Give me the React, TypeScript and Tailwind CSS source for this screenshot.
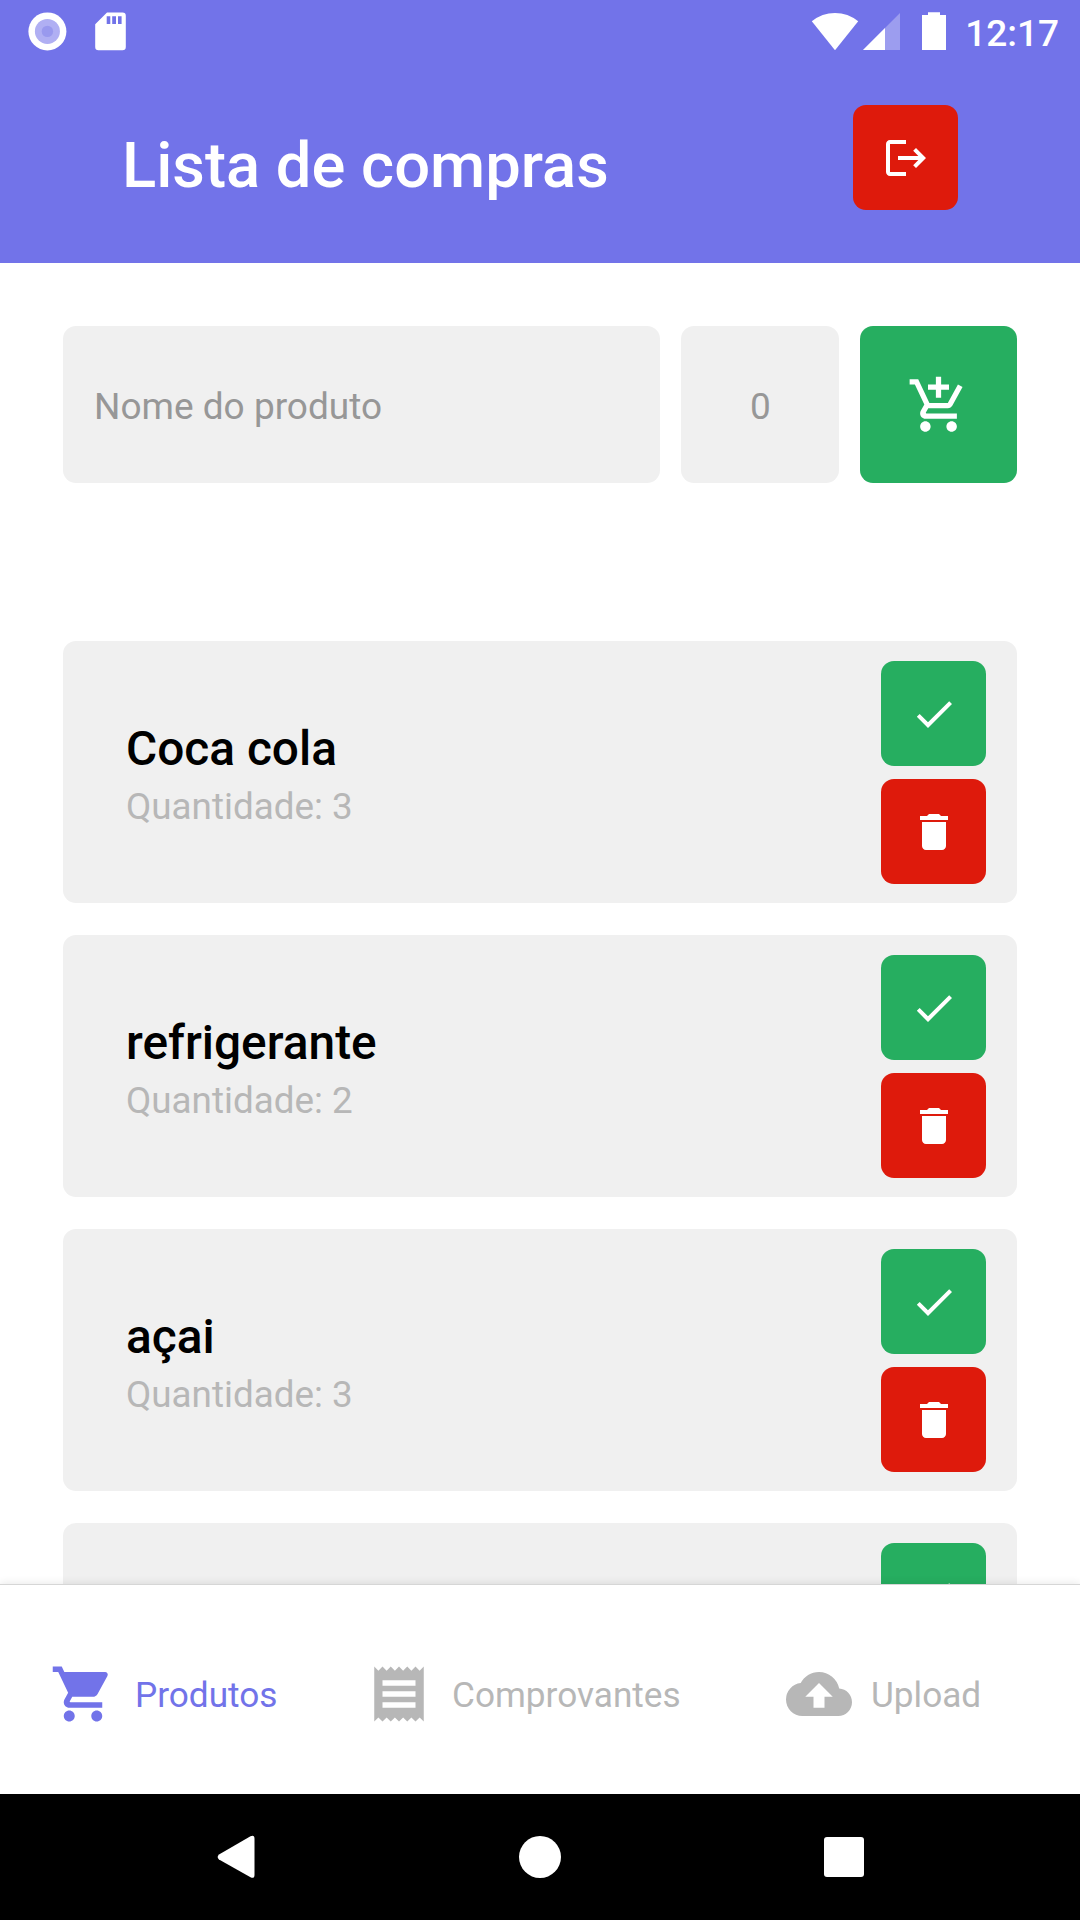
import React from "react";
import {
  MdAddShoppingCart,
  MdCheck,
  MdCloudUpload,
  MdDelete,
  MdLogout,
  MdReceipt,
  MdShoppingCart,
} from "react-icons/md";

const products = [
  { name: "Coca cola", amount: 3 },
  { name: "refrigerante", amount: 2 },
  { name: "açai", amount: 3 },
  { name: "", amount: null },
];

function StatusBar() {
  return (
    <div className="flex h-[63px] items-start justify-between pl-[28px] pr-[21px] pt-[12px] text-white">
      <div className="flex gap-[28px]">
        <svg width="39" height="39" viewBox="0 0 39 39">
          <circle cx="19.4" cy="19.4" r="19" fill="white" />
          <circle cx="19.4" cy="19.4" r="12.5" fill="#b0aff3" />
          <circle cx="19.4" cy="19.4" r="5.7" fill="#9999ee" />
        </svg>
        <svg width="31" height="39" viewBox="0 0 31 39">
          <path
            fill="white"
            fillRule="evenodd"
            d="M12 .5H27.5a3.3 3.3 0 0 1 3.3 3.3V35a3.3 3.3 0 0 1-3.3 3.3H3.500A3.3 3.3 0 0 1 .2 35V12.300ZM11.700 4.200v7.800h3.600V4.200ZM17.200 4.200v7.800h3.800V4.200ZM23 4.200v7.800h3.600V4.200Z"
          />
        </svg>
      </div>
      <div className="flex">
        <svg width="48" height="39" viewBox="0 0 48 39">
          <path fill="white" d="M.8 9.300Q11 1 24 1T47.200 9.300L24 38.300Z" />
        </svg>
        <svg className="ml-[4px]" width="38" height="39" viewBox="0 0 38 39">
          <path fill="white" fillOpacity="0.3" d="M37 1V38H0Z" />
          <path fill="white" d="M22 16V38H0Z" />
        </svg>
        <svg className="ml-[20px]" width="26" height="39" viewBox="0 0 26 39">
          <path fill="white" d="M7 .3H19V3H25V38H1V3H7Z" />
        </svg>
        <span className="ml-[18px] text-[37px] font-medium leading-[43px]">12:17</span>
      </div>
    </div>
  );
}

function Header() {
  return (
    <header className="h-[263px] shrink-0 bg-[#7273e9]">
      <StatusBar />
      <div className="flex items-start justify-between pl-[122px] pr-[122px] pt-[42px]">
        <h1 className="mt-[23px] text-[63.3px] font-medium leading-[74px] text-white">Lista de compras</h1>
        <button className="flex size-[105px] items-center justify-center rounded-[13px] bg-[#de1a0c] text-white">
          <MdLogout size={48} />
        </button>
      </div>
    </header>
  );
}

function ProductCard({ name, amount }: { name: string; amount: number | null }) {
  return (
    <li className="flex h-[262px] shrink-0 items-start justify-between rounded-[13px] bg-[#f0f0f0] pl-[63px] pr-[31px] pt-[20px]">
      <div className="pt-[60px]">
        <p className="text-[47.8px] font-medium leading-[56px] text-black">{name}</p>
        {amount !== null && (
          <p className="mt-[8px] text-[36.8px] leading-[43px] text-[#b7b7b7]">Quantidade: {amount}</p>
        )}
      </div>
      <div className="flex flex-col gap-[13px] text-white">
        <button className="flex size-[105px] items-center justify-center rounded-[13px] bg-[#26ae60]">
          <MdCheck size={48} />
        </button>
        <button className="flex size-[105px] items-center justify-center rounded-[13px] bg-[#de1a0c]">
          <MdDelete size={48} />
        </button>
      </div>
    </li>
  );
}

export default function App() {
  return (
    <div className="flex h-[1920px] w-[1080px] flex-col overflow-hidden bg-white font-['Roboto',sans-serif]">
      <Header />
      <main className="flex min-h-0 flex-1 flex-col overflow-hidden px-[63px] pt-[63px]">
        <div className="flex h-[157px] shrink-0 gap-[21px]">
          <input
            className="w-[597px] rounded-[13px] bg-[#f0f0f0] px-[31px] pt-[5px] text-[37px] outline-none placeholder:text-[#979797] placeholder:opacity-100"
            placeholder="Nome do produto"
          />
          <input
            className="w-[158px] rounded-[13px] bg-[#f0f0f0] pt-[5px] pl-[1px] text-center text-[37px] outline-none placeholder:text-[#979797] placeholder:opacity-100"
            placeholder="0"
          />
          <button className="flex w-[157px] items-center justify-center rounded-[13px] bg-[#26ae60] pt-[2px] text-white">
            <MdAddShoppingCart size={63} />
          </button>
        </div>
        <ul className="mt-[158px] flex flex-col gap-[32px]">
          {products.map((product, index) => (
            <ProductCard key={index} {...product} />
          ))}
        </ul>
      </main>
      <nav className="relative flex h-[210px] shrink-0 items-center border-t border-[#d6d6d6] bg-white pl-[50px] pt-[8px] text-[35.2px] leading-[40px] text-[#b7b7b7] shadow-[0_-1px_8px_rgba(0,0,0,0.09)]">
        <a className="flex w-[316px] items-center text-[#7273e9]">
          <MdShoppingCart size={66} />
          <span className="ml-[19px] mt-[2px]">Produtos</span>
        </a>
        <a className="flex w-[420px] items-center">
          <MdReceipt size={66} />
          <span className="ml-[20px] mt-[2px]">Comprovantes</span>
        </a>
        <a className="flex items-center">
          <MdCloudUpload size={66} />
          <span className="ml-[19px] mt-[2px]">Upload</span>
        </a>
      </nav>
      <footer className="flex h-[126px] shrink-0 items-center justify-between bg-black pl-[217px] pr-[216px]">
        <svg width="38" height="44" viewBox="0 0 38 44">
          <path
            fill="white"
            d="M33.500 1.300Q37.500-.5 37.500 4V40Q37.500 44 33.500 42.300L2 24.500Q-.7 22 2 19.500Z"
          />
        </svg>
        <span className="size-[42px] rounded-full bg-white" />
        <span className="size-[40px] rounded-[3px] bg-white" />
      </footer>
    </div>
  );
}
